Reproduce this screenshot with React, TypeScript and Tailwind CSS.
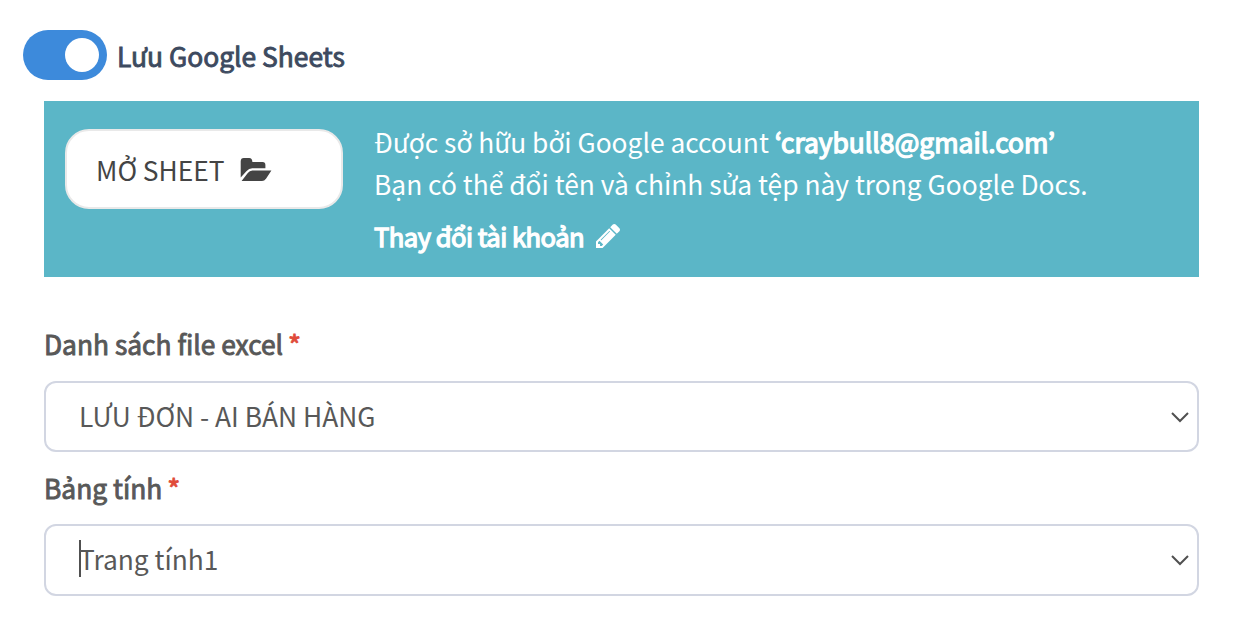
import { useState } from "react";

type SelectFieldProps = {
  label: string;
  value: string;
  focused?: boolean;
};

function FolderOpenIcon() {
  return (
    <svg className="h-[24px] w-[32px]" viewBox="0 0 32 24" fill="currentColor">
      <path d="M0.7 19.5V3.4Q0.7 0 3.8 0H9.2Q12.2 0 12.4 4H22.6Q25.4 4.2 25.4 7V10.2H12.2Q9 10.4 6.4 13.2Z" />
      <path d="M1.6 23.1L7.8 15Q9.6 12.5 12.4 12.5H31.4L26 20.8Q24.4 23.1 22 23.1Z" />
    </svg>
  );
}

function PencilIcon() {
  return (
    <svg className="h-[24px] w-[24px]" viewBox="0 -1387 1515 1515" fill="currentColor">
      <path
        transform="scale(1 -1)"
        d="M363 0l91 91l-235 235l-91 -91v-107h128v-128h107zM886 928q0 22 -22 22q-10 0 -17 -7l-542 -542q-7 -7 -7 -17q0 -22 22 -22q10 0 17 7l542 542q7 7 7 17zM832 1120l416 -416l-832 -832h-416v416zM1515 1024q0 -53 -37 -90l-166 -166l-416 416l166 165q36 38 90 38q53 0 91 -38l235 -234q37 -39 37 -91z"
      />
    </svg>
  );
}

function SelectField({ label, value, focused }: SelectFieldProps) {
  return (
    <div>
      <p className="h-[42px] text-[26.35px] leading-[42px] text-[#585858] [-webkit-text-stroke:0.9px_currentColor]">
        {label} <span className="-ml-px inline-block translate-y-px text-[28px] leading-none text-[#e04b3a]">*</span>
      </p>
      <button
        type="button"
        className={`flex w-full items-center justify-between rounded-xl border-2 border-[#d2d6e2] bg-white pr-[8px] pl-[33px] text-left text-[26.35px] text-[#585858] ${
          focused ? "mt-[15px] h-[72px]" : "mt-[16px] h-[71px]"
        }`}
      >
        <span className={`flex items-center ${focused ? "pb-[2px]" : "pb-px"}`}>
          {focused ? <span className="-mr-[2px] h-[37px] w-[2px] bg-[#505050]" /> : null}
          {value}
        </span>
        <svg className="h-[12px] w-[18px]" viewBox="0 0 18 12" fill="none" stroke="#505050" strokeWidth="2">
          <path d="M1 2L9 10L17 2" />
        </svg>
      </button>
    </div>
  );
}

export default function App() {
  const [enabled, setEnabled] = useState(true);

  return (
    <main className="h-[633px] w-[1238px] overflow-hidden bg-white pt-[30px] font-['Noto_Sans_CJK_JP',sans-serif]">
      <div className="flex h-[50px] items-center pl-[23px]">
        <button
          type="button"
          onClick={() => setEnabled(!enabled)}
          className={`flex h-[50px] w-[84px] items-center rounded-full px-[8px] ${
            enabled ? "justify-end bg-[#3d8adb]" : "justify-start bg-gray-300"
          }`}
        >
          <span className="size-[34px] rounded-full bg-white" />
        </button>
        <span className="ml-[10px] pt-[2px] text-[26.4px] text-[#3d4a5f] [-webkit-text-stroke:0.9px_currentColor]">
          Lưu Google Sheets
        </span>
      </div>

      <div className="mt-[21px] mr-[39px] ml-[44px]">
        <section className="flex h-[176px] bg-[#5bb6c7] pl-[21px] text-white">
          <button
            type="button"
            className="mt-[28px] flex h-[80px] w-[278px] items-center rounded-3xl border-2 border-[#e9e9e9] bg-white pl-[29px] text-[26.35px] text-[#444444]"
          >
            <span className="pt-[2px]">MỞ SHEET</span>
            <span className="ml-[15px] pt-px">
              <FolderOpenIcon />
            </span>
          </button>
          <div className="mt-[20px] ml-[31px] text-[26.35px] leading-[42px]">
            <p>
              Được sở hữu bởi Google account{" "}
              <span className="[-webkit-text-stroke:1.3px_currentColor]">‘craybull8@gmail.com’</span>
            </p>
            <p>Bạn có thể đổi tên và chỉnh sửa tệp này trong Google Docs.</p>
            <p className="mt-[10px] flex items-center">
              <span className="text-[25.6px] tracking-[-0.52px] [-webkit-text-stroke:1.3px_currentColor]">
                Thay đổi tài khoản
              </span>
              <span className="ml-[12px]">
                <PencilIcon />
              </span>
            </p>
          </div>
        </section>

        <div className="mt-[46px] flex flex-col gap-[15px]">
          <SelectField label="Danh sách file excel" value="LƯU ĐƠN - AI BÁN HÀNG" />
          <SelectField label="Bảng tính" value="Trang tính1" focused />
        </div>
      </div>
    </main>
  );
}
